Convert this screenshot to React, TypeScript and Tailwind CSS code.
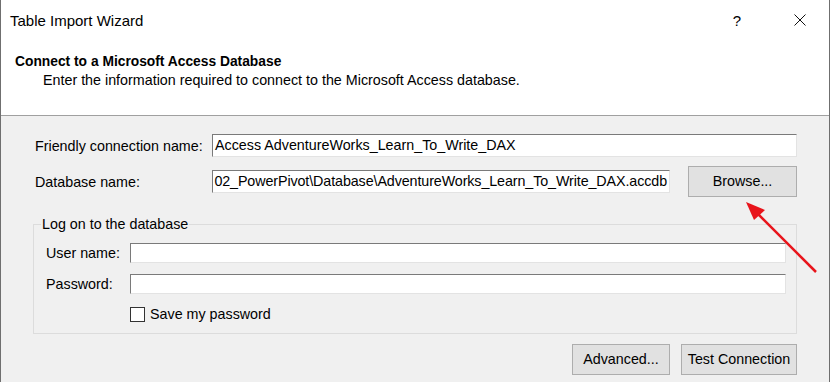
import React from 'react';

function TextBox({ value, className, alignEnd }: { value?: string; className: string; alignEnd?: boolean }) {
  return (
    <div
      className={
        'flex items-center overflow-hidden whitespace-nowrap bg-white border border-t-[#7a7a7a] border-l-[#7a7a7a] border-r-[#e3e3e3] border-b-[#e3e3e3] px-[2px] ' +
        (alignEnd ? 'justify-end ' : '') +
        className
      }
    >
      {value && <span className="shrink-0">{value}</span>}
    </div>
  );
}

function Button({ label, className }: { label: string; className: string }) {
  return (
    <div className={'flex items-center justify-center bg-[#e1e1e1] border border-[#adadad] ' + className}>
      {label}
    </div>
  );
}

export default function App() {
  return (
    <div className="relative w-[830px] h-[382px] bg-white border-l border-r border-[#6f6f6f] overflow-hidden font-['Liberation_Sans',Arial,sans-serif] text-[14.3px] leading-[19px] text-black">
      {/* title bar */}
      <div className="flex items-center h-[40px] pl-[9px] text-[15px]">
        <div className="flex-1">Table Import Wizard</div>
        <div className="w-[20px] text-center mr-[47px]">?</div>
        <svg width="12" height="12" viewBox="0 0 12 12" className="mr-[23px]">
          <path d="M0.5 0.5 L11.5 11.5 M11.5 0.5 L0.5 11.5" stroke="#111" strokeWidth="1" />
        </svg>
      </div>

      {/* header */}
      <div className="h-[75px] pt-[12px] pl-[14px]">
        <div className="font-bold text-[13.8px]">Connect to a Microsoft Access Database</div>
        <div className="pl-[28px]">Enter the information required to connect to the Microsoft Access database.</div>
      </div>
      <div className="h-px bg-[#a0a0a0]" />

      {/* body */}
      <div className="bg-[#f0f0f0] h-[300px] pl-[34px] pr-[32px] pt-[18px]">
        <div className="flex items-center h-[23px]">
          <div className="w-[177px] pt-[1px]">Friendly connection name:</div>
          <TextBox value="Access AdventureWorks_Learn_To_Write_DAX" className="flex-1 h-[23px]" />
        </div>

        <div className="flex items-center h-[31px] mt-[9px]">
          <div className="w-[177px] pt-[1px]">Database name:</div>
          <TextBox
            value="02_PowerPivot\Database\AdventureWorks_Learn_To_Write_DAX.accdb"
            className="w-[458px] h-[23px] tracking-[-0.1px]"
            alignEnd
          />
          <Button label="Browse..." className="ml-[18px] w-[109px] h-[31px]" />
        </div>

        {/* group box */}
        <div className="relative mt-[27px] -ml-[2px] h-[110px] border border-[#dcdcdc] pl-[12px] pr-[10px] pt-[18px]">
          <span className="absolute -top-[10px] left-[7px] px-[1px] bg-[#f0f0f0]">Log on to the database</span>
          <div className="flex items-center h-[20px]">
            <div className="w-[84px] pt-[1px]">User name:</div>
            <TextBox className="flex-1 h-[20px]" />
          </div>
          <div className="flex items-center h-[20px] mt-[11px]">
            <div className="w-[84px] pt-[1px]">Password:</div>
            <TextBox className="flex-1 h-[20px]" />
          </div>
          <div className="flex items-center mt-[12px] pl-[84px] h-[16px]">
            <div className="w-[15px] h-[15px] bg-white border border-[#333]" />
            <span className="ml-[5px]">Save my password</span>
          </div>
        </div>

        <div className="flex justify-end gap-[11px] mt-[10px]">
          <Button label="Advanced..." className="w-[98px] h-[31px]" />
          <Button label="Test Connection" className="w-[116px] h-[31px]" />
        </div>
      </div>

      {/* annotation arrow */}
      <svg className="absolute left-0 top-0 pointer-events-none" width="830" height="382">
        <line x1="815" y1="272" x2="752" y2="209" stroke="#e8141b" strokeWidth="2.5" />
        <polygon points="745,202 764,210 753,220" fill="#e8141b" />
      </svg>
    </div>
  );
}
